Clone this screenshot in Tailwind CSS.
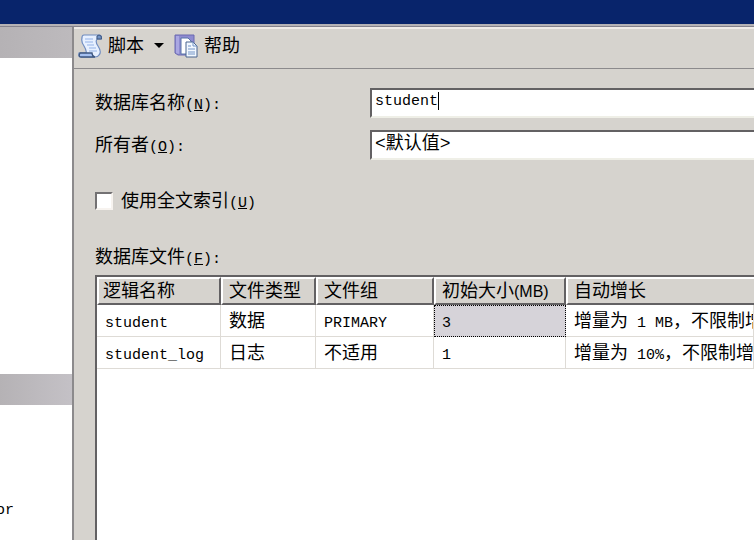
<!DOCTYPE html>
<html lang="zh-CN">
<head>
  <meta charset="UTF-8" />
  <meta name="viewport" content="width=device-width, initial-scale=1.0"/>
  <title>新建数据库</title>
  <script src="https://cdn.jsdelivr.net/npm/@tailwindcss/browser@4"></script>
</head>
<body class="h-screen overflow-hidden flex flex-col bg-[#d6d3ce] text-black text-[18px] leading-6 font-['Liberation_Sans','Noto_Sans_CJK_SC',sans-serif]">

  <!-- Title bar -->
  <div class="h-6 shrink-0 bg-[#08246b]"></div>
  <div class="h-[3px] shrink-0 bg-[#b5b2b5] border-b border-[#84828c]"></div>

  <div class="flex flex-1 min-h-0">

    <!-- Side panel -->
    <aside class="w-[74px] shrink-0 flex flex-col bg-white border-r-2 border-[#8c8a8c] overflow-hidden">
      <div class="h-[31px] shrink-0 bg-linear-to-r from-[#b5b2b5] to-[#bdbabd]"></div>
      <div class="h-[316px] shrink-0"></div>
      <div class="h-[31px] shrink-0 bg-linear-to-r from-[#b5b2b5] to-[#c4c1c6]"></div>
      <p class="mt-[94px] text-[15px] font-['Liberation_Mono',monospace] -ml-1">or</p>
    </aside>

    <!-- Page -->
    <main class="flex-1 min-w-0 flex flex-col">
      <div class="h-[42px] shrink-0 flex items-center pl-1 pb-1.5 border-t-2 border-t-[#efebe7] border-b border-b-[#8c8a8c]">
        <button type="button" class="flex items-center gap-1.5">
          <svg class="w-6 h-6" viewBox="0 0 24 24" aria-hidden="true">
            <path d="M6 1H21Q24 1 23.500 5H19Q17 8 20 12Q24 18 21 21Q20 23 17 23H3Q0 23 1 19H8Q9 17 6 12Q3 8 4 4Q4 1 6 1Z" fill="#e7f0ff" stroke="#6f8cc0" stroke-width="1.200"/>
            <path d="M19 5Q18 1 21 1Q24 1 23.500 5Z" fill="#7394c6" stroke="#3d5680"/>
            <path d="M2 19H14Q14 22 17 23H3Q0 23 2 19Z" fill="#a5c0f0" stroke="#3d5680" stroke-width="1.300"/>
            <path d="M7 5H15M7 8H15M9 11H16M11 14H18M11 17H19" stroke="#94b2e7" stroke-width="1.200"/>
          </svg>
          <span>脚本</span>
          <svg class="w-2.5 h-[5px] ml-1" viewBox="0 0 10 5" aria-hidden="true"><path d="M0 0H10L5 5Z"/></svg>
        </button>
        <button type="button" class="flex items-center gap-1.5 ml-2.5">
          <svg class="w-6 h-6" viewBox="0 0 24 24" aria-hidden="true">
            <path d="M1 1H20V21H4L1 19Z" fill="#8e8bd0" stroke="#6a69b0"/>
            <path d="M2 2V19L5 20V2Z" fill="#aaa7e2"/>
            <path d="M7 4H14L17 7V20H7Z" fill="#fff" stroke="#5875a8"/>
            <path d="M12 8H19L23 12V23H12Z" fill="#f2f8ff" stroke="#48658f"/>
            <path d="M19 8V12H23M14 12H17M14 15H21M14 18H21M14 20H21" fill="none" stroke="#7394c6"/>
          </svg>
          <span>帮助</span>
        </button>
      </div>

      <form class="flex-1 min-h-0 flex flex-col pl-[21px] pt-[19px]">
        <div class="grid grid-cols-[275px_1fr] gap-y-3 items-center">
          <label for="dbName">数据库名称<span class="text-[15px] leading-none font-['Liberation_Mono',monospace]">(<u>N</u>):</span></label>
          <div class="relative">
            <input id="dbName" type="text" value="student" class="block w-full h-[30px] bg-white pl-[3px] pb-1 text-[15px] font-['Liberation_Mono',monospace] outline-none border-t-2 border-l-2 border-b-2 border-t-[#636163] border-l-[#636163] border-b-[#efefe7]" />
            <span class="absolute left-[68px] top-1 w-px h-[18px] bg-black"></span>
          </div>
          <label for="owner">所有者<span class="text-[15px] leading-none font-['Liberation_Mono',monospace]">(<u>O</u>):</span></label>
          <select id="owner" class="appearance-none block w-full h-[30px] bg-white pl-[3px] pb-1 outline-none border-t-2 border-l-2 border-b-2 border-t-[#636163] border-l-[#636163] border-b-[#efefe7] text-[18px] leading-6 font-['Liberation_Mono','Noto_Sans_CJK_SC',monospace]">
            <option>&lt;默认值&gt;</option>
          </select>
        </div>

        <div class="flex items-center gap-2 mt-[29px]">
          <input id="fullText" type="checkbox" class="appearance-none size-[18px] bg-white border-2 border-t-[#737173] border-l-[#737173] border-b-[#f7f3ef] border-r-[#f7f3ef]" />
          <label for="fullText">使用全文索引<span class="text-[15px] leading-none font-['Liberation_Mono',monospace]">(<u>U</u>)</span></label>
        </div>

        <h2 id="filesLabel" class="mt-8">数据库文件<span class="text-[15px] leading-none font-['Liberation_Mono',monospace]">(<u>F</u>):</span></h2>

        <!-- Files grid -->
        <div class="flex-1 min-h-0 mt-1.5 bg-white border-t-2 border-l-2 border-[#636163] overflow-hidden">
          <table aria-labelledby="filesLabel" class="w-full table-fixed border-separate border-spacing-0 text-left whitespace-nowrap">
            <colgroup>
              <col class="w-[124px]"><col class="w-[95px]"><col class="w-[118px]"><col class="w-[132px]"><col>
            </colgroup>
            <thead class="bg-[#d6d3ce]">
              <tr class="h-7">
                <th class="p-0 pl-1 font-normal border-2 border-t-white border-l-white border-r-[#636163] border-b-[#636163]">逻辑名称</th>
                <th class="p-0 pl-1.5 font-normal border-2 border-t-white border-l-white border-r-[#636163] border-b-[#636163]">文件类型</th>
                <th class="p-0 pl-1.5 font-normal border-2 border-t-white border-l-white border-r-[#636163] border-b-[#636163]">文件组</th>
                <th class="p-0 pl-1.5 font-normal border-2 border-t-white border-l-white border-r-[#636163] border-b-[#636163]">初始大小<span class="text-[16px] leading-none">(MB)</span></th>
                <th class="p-0 pl-1.5 font-normal border-y-2 border-l-2 border-t-white border-l-white border-b-[#636163]">自动增长</th>
              </tr>
            </thead>
            <tbody id="fileRows"></tbody>
          </table>
        </div>
      </form>
    </main>
  </div>

  <script>
    const files = [
      { name: "student", type: "数据", group: "PRIMARY", size: "3", growth: ["增量为", " 1 MB", "，不限制增长"], selected: true },
      { name: "student_log", type: "日志", group: "不适用", size: "1", growth: ["增量为", " 10%", "，不限制增长"] }
    ];

    const latin = "text-[15px] leading-none font-['Liberation_Mono',monospace]";
    const cell = "p-0 pl-2 border-r border-b border-[#dedbd6]";
    const selectedCell = "p-0 pl-[7px] border border-dotted border-black bg-[#d6d3d9]";

    function part(text) {
      return /^[\x20-\x7e]+$/.test(text) ? `<span class="${latin} whitespace-pre">${text}</span>` : text;
    }

    document.getElementById("fileRows").innerHTML = files.map(file => `
      <tr class="h-8">
        <td class="${cell}">${part(file.name)}</td>
        <td class="${cell}">${part(file.type)}</td>
        <td class="${cell}">${part(file.group)}</td>
        <td class="${file.selected ? selectedCell : cell}">${part(file.size)}</td>
        <td class="${cell} overflow-hidden">${file.growth.map(part).join("")}</td>
      </tr>
    `).join("");
  </script>

</body>
</html>
